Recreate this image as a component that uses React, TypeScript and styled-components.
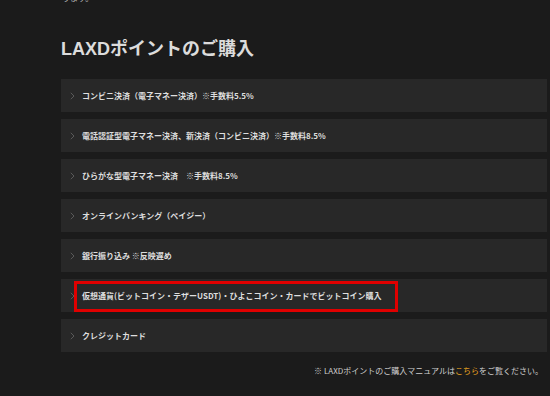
import styled, { createGlobalStyle } from 'styled-components';

const GlobalStyle = createGlobalStyle`
  html, body {
    margin: 0;
    padding: 0;
    background: #1b1b1b;
    overflow: hidden;
  }
  body {
    width: 550px;
    height: 396px;
    font-family: "Noto Sans CJK JP", "Noto Sans", sans-serif;
  }
`;

const methods = [
  'コンビニ決済（電子マネー決済）※手数料5.5%',
  '電話認証型電子マネー決済、新決済（コンビニ決済）※手数料8.5%',
  'ひらがな型電子マネー決済　※手数料8.5%',
  'オンラインバンキング（ペイジー）',
  '銀行振り込み ※反映遅め',
  '仮想通貨(ビットコイン・テザーUSDT)・ひよこコイン・カードでビットコイン購入',
  'クレジットカード',
];

// 赤枠で囲まれている決済方法
const HIGHLIGHTED = 5;

const App = () => {
  return (
    <>
      <GlobalStyle />
      <Page>
        <TopNote>ります。</TopNote>
        <Heading>LAXDポイントのご購入</Heading>
        <MethodList>
          {methods.map((label, i) => (
            <MethodRow key={label}>
              <Chevron />
              <MethodLabel>{label}</MethodLabel>
              {i === HIGHLIGHTED && <Highlight />}
            </MethodRow>
          ))}
        </MethodList>
        <Footer>
          ※ LAXDポイントのご購入マニュアルは<ManualLink>こちら</ManualLink>をご覧ください。
        </Footer>
      </Page>
    </>
  );
};
export default App;

const Chevron = () => (
  <svg width="5" height="8" viewBox="0 0 5 8" fill="none">
    <polyline points="0.8,0.8 4,4 0.8,7.2" stroke="#595959" strokeWidth="1" />
  </svg>
);

const Page = styled.div`
  padding: 0 3px 0 61px;
  display: flex;
  flex-direction: column;
`;

const TopNote = styled.p`
  margin: -7px 0 0 1px;
  font-size: 8px;
  line-height: 10px;
  color: #bbb;
`;

const Heading = styled.h2`
  margin: 36px 0 20px;
  font-size: 18px;
  line-height: 20px;
  font-weight: 700;
  color: #dcdcdc;
  font-family: "Liberation Sans", "Noto Sans CJK JP", sans-serif;
`;

const MethodList = styled.div`
  display: flex;
  flex-direction: column;
  gap: 7px;
`;

const MethodRow = styled.div`
  position: relative;
  height: 33px;
  display: flex;
  align-items: center;
  gap: 7px;
  padding-left: 9px;
  background: #282828;
`;

const MethodLabel = styled.span`
  font-size: 8px;
  font-weight: 700;
  color: #dedede;
  white-space: nowrap;
`;

const Highlight = styled.div`
  position: absolute;
  left: 13px;
  top: 2px;
  width: 324px;
  height: 31px;
  box-sizing: border-box;
  border: 3px solid #e00000;
  pointer-events: none;
`;

const Footer = styled.p`
  margin: 14px 4px 0 0;
  text-align: right;
  font-size: 8px;
  line-height: 10px;
  color: #cfcfcf;
`;

const ManualLink = styled.span`
  color: #e9a521;
`;
